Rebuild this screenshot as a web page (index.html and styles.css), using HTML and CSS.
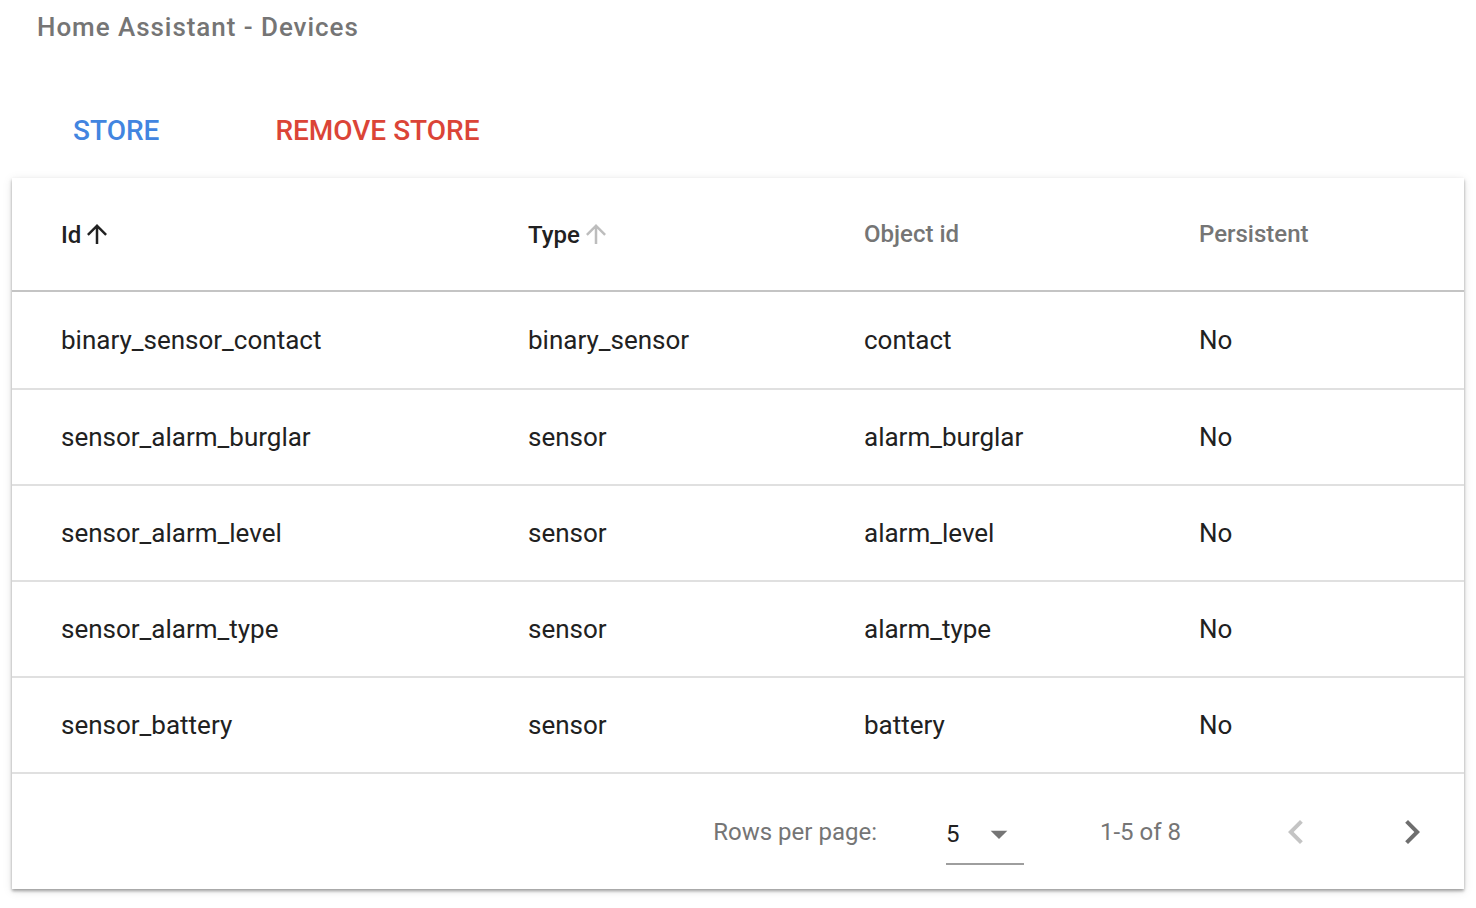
FILE: index.html
```html
<!DOCTYPE html>
<html>
<head>
<meta charset="utf-8">
<title>Home Assistant - Devices</title>
<link rel="stylesheet" href="styles.css">
</head>
<body>
<header class="title">Home Assistant - Devices</header>
<div class="actions">
  <button class="btn btn-store">STORE</button>
  <button class="btn btn-remove">REMOVE STORE</button>
</div>
<div class="card">
  <table class="table">
    <colgroup>
      <col class="c1"><col class="c2"><col class="c3"><col class="c4">
    </colgroup>
    <thead>
      <tr>
        <th class="active">Id<svg class="sort" viewBox="0 0 24 24"><path d="M4 12l1.41 1.41L11 7.83V20h2V7.83l5.58 5.59L20 12l-8-8-8 8z"/></svg></th>
        <th class="active">Type<svg class="sort sort-off" viewBox="0 0 24 24"><path d="M4 12l1.41 1.41L11 7.83V20h2V7.83l5.58 5.59L20 12l-8-8-8 8z"/></svg></th>
        <th>Object id</th>
        <th>Persistent</th>
      </tr>
    </thead>
    <tbody>
      <tr><td>binary_sensor_contact</td><td>binary_sensor</td><td>contact</td><td>No</td></tr>
      <tr><td>sensor_alarm_burglar</td><td>sensor</td><td>alarm_burglar</td><td>No</td></tr>
      <tr><td>sensor_alarm_level</td><td>sensor</td><td>alarm_level</td><td>No</td></tr>
      <tr><td>sensor_alarm_type</td><td>sensor</td><td>alarm_type</td><td>No</td></tr>
      <tr><td>sensor_battery</td><td>sensor</td><td>battery</td><td>No</td></tr>
    </tbody>
  </table>
  <div class="footer">
    <span class="rows-label">Rows per page:</span>
    <div class="select">
      <span class="select-value">5</span>
      <svg class="drop" viewBox="0 0 24 24"><path d="M7 10l5 5 5-5z"/></svg>
    </div>
    <span class="range">1-5 of 8</span>
    <svg class="chev chev-off" viewBox="0 0 24 24"><path d="M15.41 7.41L14 6l-6 6 6 6 1.41-1.41L10.83 12z"/></svg>
    <svg class="chev chev-on" viewBox="0 0 24 24"><path d="M10 6L8.59 7.41 13.17 12l-4.58 4.59L10 18l6-6z"/></svg>
  </div>
</div>
</body>
</html>
```
FILE: styles.css
```css
* { box-sizing: border-box; }
html, body { margin: 0; padding: 0; background: #fff; }
body {
  font-family: Roboto, "Liberation Sans", Arial, sans-serif;
  color: #212121;
  padding-bottom: 16px;
}
.title {
  padding: 12px 0 0 37px;
  font-size: 26px;
  line-height: 30px;
  font-weight: 500;
  letter-spacing: 0.95px;
  color: #757575;
}
.actions {
  display: flex;
  margin-top: 53px;
  padding-left: 57px;
  gap: 84px;
}
.btn {
  font-family: inherit;
  font-size: 28px;
  font-weight: 500;
  height: 72px;
  line-height: 72px;
  padding: 0 16px;
  border: 0;
  background: transparent;
  cursor: pointer;
}
.btn-store { color: #4285e0; }
.btn-remove { color: #db4437; }
.card {
  margin: 11px 12px 0 12px;
  background: #fff;
  box-shadow: 0 2px 10px rgba(0,0,0,0.10), 0 2px 3px rgba(0,0,0,0.35);
}
.table {
  width: 100%;
  border-collapse: collapse;
  table-layout: fixed;
}
.c1 { width: 467px; }
.c2 { width: 336px; }
.c3 { width: 335px; }
th, td {
  text-align: left;
  padding: 0 0 0 49px;
  white-space: nowrap;
}
th {
  height: 113px;
  font-size: 24px;
  font-weight: 500;
  color: #757575;
  border-bottom: 2px solid #c4c4c4;
}
th.active { color: #212121; }
.sort {
  width: 30px;
  height: 30px;
  fill: #212121;
  vertical-align: -6px;
  margin-left: 1px;
}
.sort-off { fill: #bdbdbd; }
td {
  height: 96px;
  font-size: 26px;
  color: #212121;
  border-bottom: 2px solid #e0e0e0;
}
tbody tr:first-child td { height: 98px; }
.footer {
  display: flex;
  align-items: center;
  justify-content: flex-end;
  height: 115px;
  padding-right: 28px;
  font-size: 24px;
  color: #757575;
}
.rows-label { margin-right: 69px; }
.select {
  display: flex;
  align-items: center;
  width: 78px;
  height: 60px;
  border-bottom: 2px solid #9e9e9e;
  margin-top: 6px;
  margin-right: 76px;
}
.select-value { color: #212121; }
.drop {
  width: 40px;
  height: 40px;
  fill: #757575;
  margin-left: 20px;
}
.range { margin-right: 91px; }
.chev { width: 48px; height: 48px; }
.chev-off { fill: #c4c4c4; margin-right: 68px; }
.chev-on { fill: #6e6e6e; }
```
